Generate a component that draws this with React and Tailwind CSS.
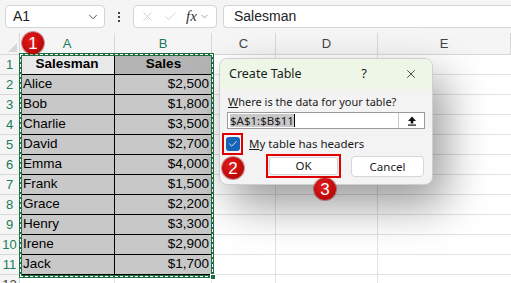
import { ChevronDown, X, Check } from "lucide-react";

const data = [
  ["Salesman", "Sales"],
  ["Alice", "$2,500"],
  ["Bob", "$1,800"],
  ["Charlie", "$3,500"],
  ["David", "$2,700"],
  ["Emma", "$4,000"],
  ["Frank", "$1,500"],
  ["Grace", "$2,200"],
  ["Henry", "$3,300"],
  ["Irene", "$2,900"],
  ["Jack", "$1,700"],
];

const Badge = ({ n, className }) => (
  <div
    className={`absolute w-[22px] h-[22px] rounded-full bg-[radial-gradient(circle_at_40%_35%,#e41b1b,#a80000)] text-white text-[17px] leading-none flex items-center justify-center font-['Liberation_Sans',sans-serif] shadow-[0_0_0_1px_rgba(120,0,0,0.4)] ${className}`}
  >
    {n}
  </div>
);

const App = () => {
  return (
    <div className="relative w-[511px] h-[283px] overflow-hidden bg-white font-['Liberation_Sans',sans-serif]">
      {/* formula bar */}
      <div className="flex items-center h-[33px] bg-[#f5f5f5] pl-[5px] gap-[6px]">
        <div className="flex items-center w-[100px] h-[23px] bg-white border border-[#d4d4d4] rounded-[4px] pl-[7px] pr-[4px] text-[14px] text-[#222]">
          <span className="flex-1">A1</span>
          <ChevronDown size={14} strokeWidth={1.5} className="text-[#444]" />
        </div>
        <div className="w-[16px] flex flex-col items-center gap-[2px]">
          <div className="w-[2px] h-[2px] bg-[#444]" />
          <div className="w-[2px] h-[2px] bg-[#444]" />
          <div className="w-[2px] h-[2px] bg-[#444]" />
        </div>
        <div className="flex items-center w-[84px] h-[23px] bg-white border border-[#d4d4d4] rounded-[4px] pl-[6px] gap-[8px]">
          <X size={15} strokeWidth={1} className="text-[#b8b8b8]" />
          <Check size={15} strokeWidth={1} className="text-[#b8b8b8]" />
          <span className="font-['Liberation_Serif',serif] italic text-[15px] text-[#333] leading-none">fx</span>
          <ChevronDown size={11} strokeWidth={1.5} className="text-[#777] -ml-[6px]" />
        </div>
        <div className="flex-1 h-[23px] bg-white border border-[#d4d4d4] rounded-l-[4px] border-r-0 pl-[10px] flex items-center text-[14px] text-[#222]">
          Salesman
        </div>
      </div>

      {/* sheet grid */}
      <div className="grid grid-cols-[20px_95px_97px_64px_102px_1fr] grid-rows-[22px_repeat(12,20px)] text-[13.5px]">
        <div className="bg-[#f5f5f5] border-r border-b border-[#d8d8d8] flex items-end justify-end p-[2px]">
          <div className="w-0 h-0 border-l-[9px] border-l-transparent border-b-[9px] border-b-[#d8d8d8]" />
        </div>
        {["A", "B", "C", "D", "E"].map((c, i) => (
          <div
            key={c}
            className={`bg-[#f5f5f5] border-r border-b border-[#d8d8d8] flex items-center justify-center text-[13px] ${i < 2 ? "text-[#217a5b]" : "text-[#444]"}`}
          >
            {c}
          </div>
        ))}
        {data.map((row, r) => (
          <div key={r} className="contents">
            <div className="bg-[#f5f5f5] border-r border-b border-[#d8d8d8] flex items-center justify-center text-[13px] text-[#217a5b]">
              {r + 1}
            </div>
            <div
              className={`border-r border-b border-black flex items-center px-[3px] text-black ${r === 0 ? "bg-[#e8e8e8] font-bold justify-center" : "bg-[#c8c8c8]"}`}
            >
              {row[0]}
            </div>
            <div
              className={`border-b border-black flex items-center px-[3px] text-black ${r === 0 ? "bg-[#b4b4b4] font-bold justify-center" : "bg-[#c8c8c8] justify-end"}`}
            >
              {row[1]}
            </div>
            <div className="border-r border-b border-[#e1e1e1]" />
            <div className="border-r border-b border-[#e1e1e1]" />
            <div className="border-b border-[#e1e1e1]" />
          </div>
        ))}
        <div className="bg-[#f5f5f5] border-r border-[#d8d8d8] flex items-start justify-center text-[13px] text-[#444]">
          12
        </div>
        <div className="border-r border-[#e1e1e1]" />
        <div className="border-r border-[#e1e1e1]" />
        <div className="border-r border-[#e1e1e1]" />
        <div className="border-r border-[#e1e1e1]" />
        <div />
      </div>

      {/* marching ants around A1:B11 */}
      <div className="absolute left-[19px] top-[53px] w-[195px] h-[225px] border-[3px] border-[#1e6e42]">
        <div className="absolute inset-[-2px] border border-dashed border-white" />
        <div className="absolute -right-[5px] -bottom-[5px] w-[6px] h-[6px] bg-[#1e6e42] border border-white" />
      </div>

      {/* Create Table dialog */}
      <div className="absolute left-[219px] top-[58px] w-[214px] h-[127px] rounded-[8px] border border-[#cfcfcf] bg-[#f3f3f3] shadow-[12px_20px_44px_rgba(0,0,0,0.4)] overflow-hidden font-['Noto_Sans',sans-serif] text-[#1a1a1a]">
        <div className="flex items-center h-[30px] bg-[#eef6e8] pl-[9px] pr-[14px] text-[12.5px]">
          <span className="flex-1">Create Table</span>
          <span className="mr-[37px] text-[13px]">?</span>
          <X size={14} strokeWidth={1.3} />
        </div>
        <div className="px-[7px] pt-[5px]">
          <div className="text-[11px] leading-[16px] pl-[1px]">
            <span className="underline">W</span>here is the data for your table?
          </div>
          <div className="flex items-center h-[17px] mt-[2px] bg-white border border-[#9a9a9a] pl-[2px] text-[11.5px]">
            <span className="bg-[#c8c8c8] leading-[13px]">$A$1:$B$11</span>
            <span className="w-px h-[13px] bg-black" />
            <div className="ml-auto w-[26px] h-full border-l border-[#c8c8c8] flex items-center justify-center">
              <svg width="10" height="10" viewBox="0 0 10 10">
                <path d="M5 0.5 L9 5 L6.3 5 L6.3 7.5 L3.7 7.5 L3.7 5 L1 5 Z" fill="#111" />
                <rect x="1" y="8.5" width="8" height="1.2" fill="#111" />
              </svg>
            </div>
          </div>
          <div className="flex items-center mt-[4px]">
            <div className="w-[21px] h-[22px] -ml-[5px] border-2 border-[#e00000] flex items-center justify-center">
              <div className="w-[14px] h-[14px] rounded-[3px] bg-[#1664b8] flex items-center justify-center">
                <Check size={10} strokeWidth={2} className="text-white" />
              </div>
            </div>
            <span className="ml-[6px] text-[11.5px]">
              <span className="underline">M</span>y table has headers
            </span>
          </div>
          <div className="flex justify-end gap-[10px] -mt-[1px] pr-[1px]">
            <div className="w-[75px] h-[24px] border-2 border-[#e00000] p-[1px]">
              <div className="w-full h-full bg-white border border-[#d6d6d6] rounded-[3px] flex items-center justify-center text-[11.5px]">
                OK
              </div>
            </div>
            <div className="w-[73px] h-[21px] mt-[2px] bg-white border border-[#d6d6d6] rounded-[4px] flex items-center justify-center text-[11.5px]">
              Cancel
            </div>
          </div>
        </div>
      </div>

      <Badge n="1" className="left-[22px] top-[32px]" />
      <Badge n="2" className="left-[222px] top-[157px]" />
      <Badge n="3" className="left-[314px] top-[178px]" />
    </div>
  );
};

export default App;
